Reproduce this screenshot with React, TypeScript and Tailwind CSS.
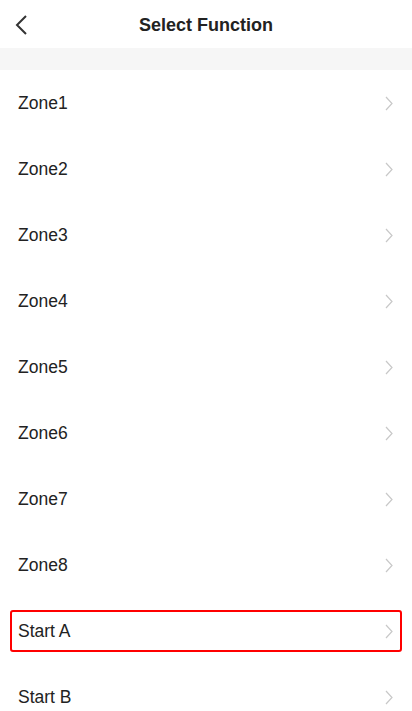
const items = ["Zone1", "Zone2", "Zone3", "Zone4", "Zone5", "Zone6", "Zone7", "Zone8", "Start A", "Start B"];

function Chevron({ className }: { className?: string }) {
  return (
    <svg width="8" height="15" viewBox="0 0 8 15" fill="none" className={className}>
      <path d="M1 1l6 6.5L1 14" stroke="currentColor" strokeWidth="1.2" />
    </svg>
  );
}

export default function App() {
  return (
    <div className="w-[412px] h-[711px] overflow-hidden bg-white text-[#222] font-['Helvetica','Liberation_Sans',sans-serif]">
      <div className="h-[48px] pt-[2px] flex items-center relative">
        <svg width="14" height="20" viewBox="0 0 14 20" fill="none" className="absolute left-[14px] top-[15px] text-[#333]">
          <path d="M12 1L3 10l9 9" stroke="currentColor" strokeWidth="2" />
        </svg>
        <div className="flex-1 text-center text-[18px] font-bold">Select Function</div>
      </div>
      <div className="h-[22px] bg-[#f6f6f6]" />
      <div className="flex flex-col">
        {items.map((it) => (
          <div key={it} className="h-[66px] flex items-center px-[10px]">
            <div
              className={`flex-1 h-[42px] flex items-center justify-between pl-[6px] pr-[7px] rounded-[3px] border-2 ${
                it === "Start A" ? "border-[#f00]" : "border-transparent"
              }`}
            >
              <span className="text-[17.5px]">{it}</span>
              <Chevron className="text-[#c8c8c8]" />
            </div>
          </div>
        ))}
      </div>
    </div>
  );
}
